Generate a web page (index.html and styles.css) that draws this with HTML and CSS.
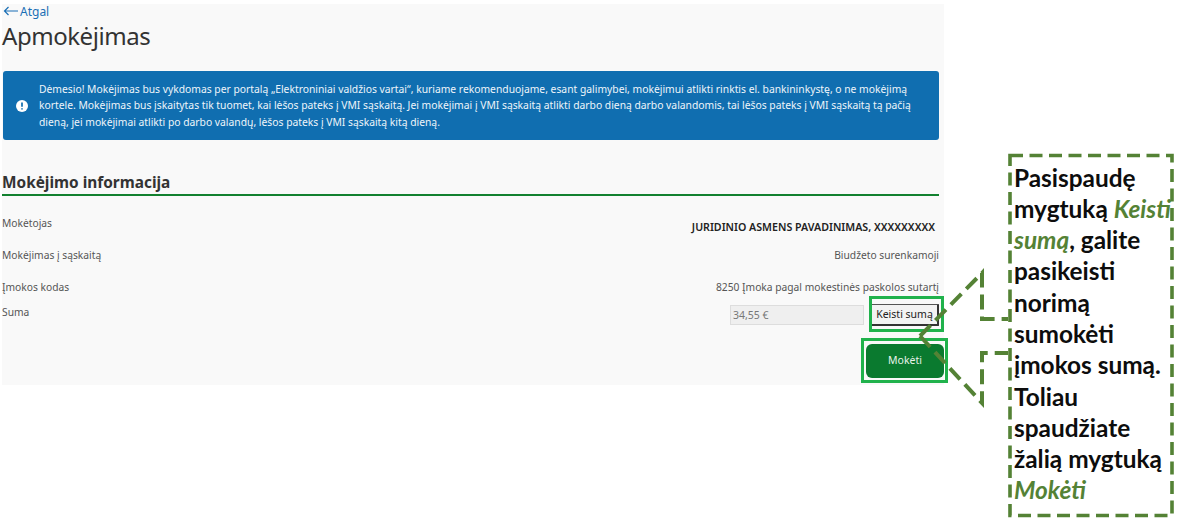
FILE: index.html
```html
<!DOCTYPE html>
<html lang="lt">
<head>
<meta charset="utf-8">
<title>Apmokėjimas</title>
<link rel="stylesheet" href="styles.css">
</head>
<body>
<main class="panel">
  <a class="back" href="#"><svg class="back-icon" width="15" height="10" viewBox="0 0 15 10"><path d="M15 5H1.5M5.5 1 1.5 5l4 4" fill="none" stroke="#1a6fb5" stroke-width="1.2"/></svg>Atgal</a>
  <h1 class="title">Apmokėjimas</h1>
  <div class="alert">
    <svg class="alert-icon" width="12" height="12" viewBox="0 0 12 12"><circle cx="6" cy="6" r="6" fill="#fff"/><path d="M6 2.6v4.2M6 8.2v1.3" stroke="#106eb0" stroke-width="1.7"/></svg>
    <p class="alert-text">Dėmesio! Mokėjimas bus vykdomas per portalą „Elektroniniai valdžios vartai“, kuriame rekomenduojame, esant galimybei, mokėjimui atlikti rinktis el. bankininkystę, o ne mokėjimą<br>kortele. Mokėjimas bus įskaitytas tik tuomet, kai lėšos pateks į VMI sąskaitą. Jei mokėjimai į VMI sąskaitą atlikti darbo dieną darbo valandomis, tai lėšos pateks į VMI sąskaitą tą pačią<br>dieną, jei mokėjimai atlikti po darbo valandų, lėšos pateks į VMI sąskaitą kitą dieną.</p>
  </div>
  <h2 class="section">Mokėjimo informacija</h2>
  <div class="row row-payer"><span>Mokėtojas</span><strong class="payer">JURIDINIO ASMENS PAVADINIMAS, XXXXXXXXX</strong></div>
  <div class="row row-account"><span>Mokėjimas į sąskaitą</span><span>Biudžeto surenkamoji</span></div>
  <div class="row row-code"><span>Įmokos kodas</span><span>8250 Įmoka pagal mokestinės paskolos sutartį</span></div>
  <div class="row row-sum">
    <span class="sum-label">Suma</span>
    <div class="sum-controls">
      <input class="sum-input" value="34,55 €" disabled>
      <button class="change" type="button">Keisti sumą</button>
    </div>
  </div>
  <div class="actions"><button class="pay" type="button">Mokėti</button></div>
</main>

<div class="mark mark-change"></div>
<div class="mark mark-pay"></div>

<svg class="connector" width="1184" height="526" viewBox="0 0 1184 526">
  <path d="M920 336 982 273V319H1008M920 336 982 403V353H1008" fill="none" stroke="#548235" stroke-width="4" stroke-dasharray="15 7"/>
  <rect x="1010" y="155.500" width="162" height="360" fill="none" stroke="#548235" stroke-width="3.6" stroke-dasharray="13 6.500"/>
</svg>

<aside class="note">Pasispaudę<br>mygtuką <em>Keisti<br>sumą</em>, galite<br>pasikeisti<br>norimą<br>sumokėti<br>įmokos sumą.<br>Toliau<br>spaudžiate<br>žalią mygtuką<br><em>Mokėti</em></aside>
</body>
</html>
```
FILE: styles.css
```css
* { box-sizing: border-box; }
html, body { margin: 0; padding: 0; background: #fff; }
body {
  width: 1184px;
  height: 526px;
  overflow: hidden;
  position: relative;
  font-family: "Noto Sans", "Liberation Sans", sans-serif;
  color: #555;
}
.panel {
  width: 942px;
  height: 381px;
  margin: 4px 0 0 2px;
  padding: 0 5px 0 0;
  background: #f9f9f9;
}
.back {
  display: flex;
  align-items: center;
  gap: 2px;
  height: 14px;
  padding-left: 1px;
  color: #1a6fb5;
  font-size: 12px;
  text-decoration: none;
}
.title {
  margin: 3px 0 0;
  font-size: 24px;
  line-height: 30px;
  font-weight: 400;
  color: #333;
  letter-spacing: -0.45px;
}
.alert {
  display: flex;
  align-items: center;
  gap: 11px;
  height: 69px;
  margin: 20px 0 0 1px;
  padding: 0 0 0 13px;
  background: #106eb0;
  border-radius: 3px;
  color: #eef5fa;
}
.alert-icon { flex: none; }
.alert-text {
  margin: 0;
  font-size: 10.32px;
  line-height: 16.4px;
  white-space: nowrap;
}
.section {
  margin: 31px 0 0;
  height: 25px;
  padding-top: 2px;
  border-bottom: 2px solid #12812f;
  font-size: 15.4px;
  line-height: 20px;
  font-weight: 700;
  color: #333;
}
.row {
  display: flex;
  justify-content: space-between;
  font-size: 10.25px;
  line-height: 14px;
  white-space: nowrap;
}
.row-payer { height: 32px; margin-top: 20px; }
.row-account { height: 32px; }
.row-code { height: 25px; }
.payer { position: relative; top: 4px; right: 4px; color: #222; font-weight: 600; font-size: 10.65px; }
.row-sum { height: 39px; }
.sum-controls { display: flex; gap: 7px; align-items: center; height: 22px; transform: translateY(-1px); }
.sum-input {
  width: 134px;
  height: 20px;
  padding: 0 2px;
  border: 1px solid #ddd;
  background: #efefef;
  color: #777;
  font: 10.5px "Noto Sans", sans-serif;
}
.change {
  width: 68px;
  height: 22px;
  padding: 0 0 1px;
  border: 1px solid #555;
  border-right: 2px solid #333;
  border-bottom: 2px solid #333;
  border-radius: 1px;
  background: #f3f3f3;
  color: #222;
  font: 10.5px "Noto Sans", sans-serif;
}
.actions { display: flex; justify-content: flex-end; margin-right: -5px; }
.pay {
  width: 78px;
  height: 34px;
  padding: 0 0 2px;
  border: 0;
  border-radius: 6px;
  background: #0a7a2f;
  color: #e8f3ea;
  font: 10.5px "Noto Sans", sans-serif;
}
.mark {
  position: absolute;
  border: 3px solid #20b24c;
}
.mark-change { left: 869px; top: 296px; width: 75px; height: 36px; }
.mark-pay { left: 861px; top: 338px; width: 87px; height: 45px; }
.connector { position: absolute; left: 0; top: 0; pointer-events: none; }
.note {
  position: absolute;
  left: 1014px;
  top: 161.500px;
  font-family: Lato, "Liberation Sans", sans-serif;
  font-size: 24.4px;
  line-height: 31.3px;
  font-weight: 700;
  color: #0d0d0d;
  white-space: nowrap;
}
.note em { color: #548235; font-style: italic; }
```
